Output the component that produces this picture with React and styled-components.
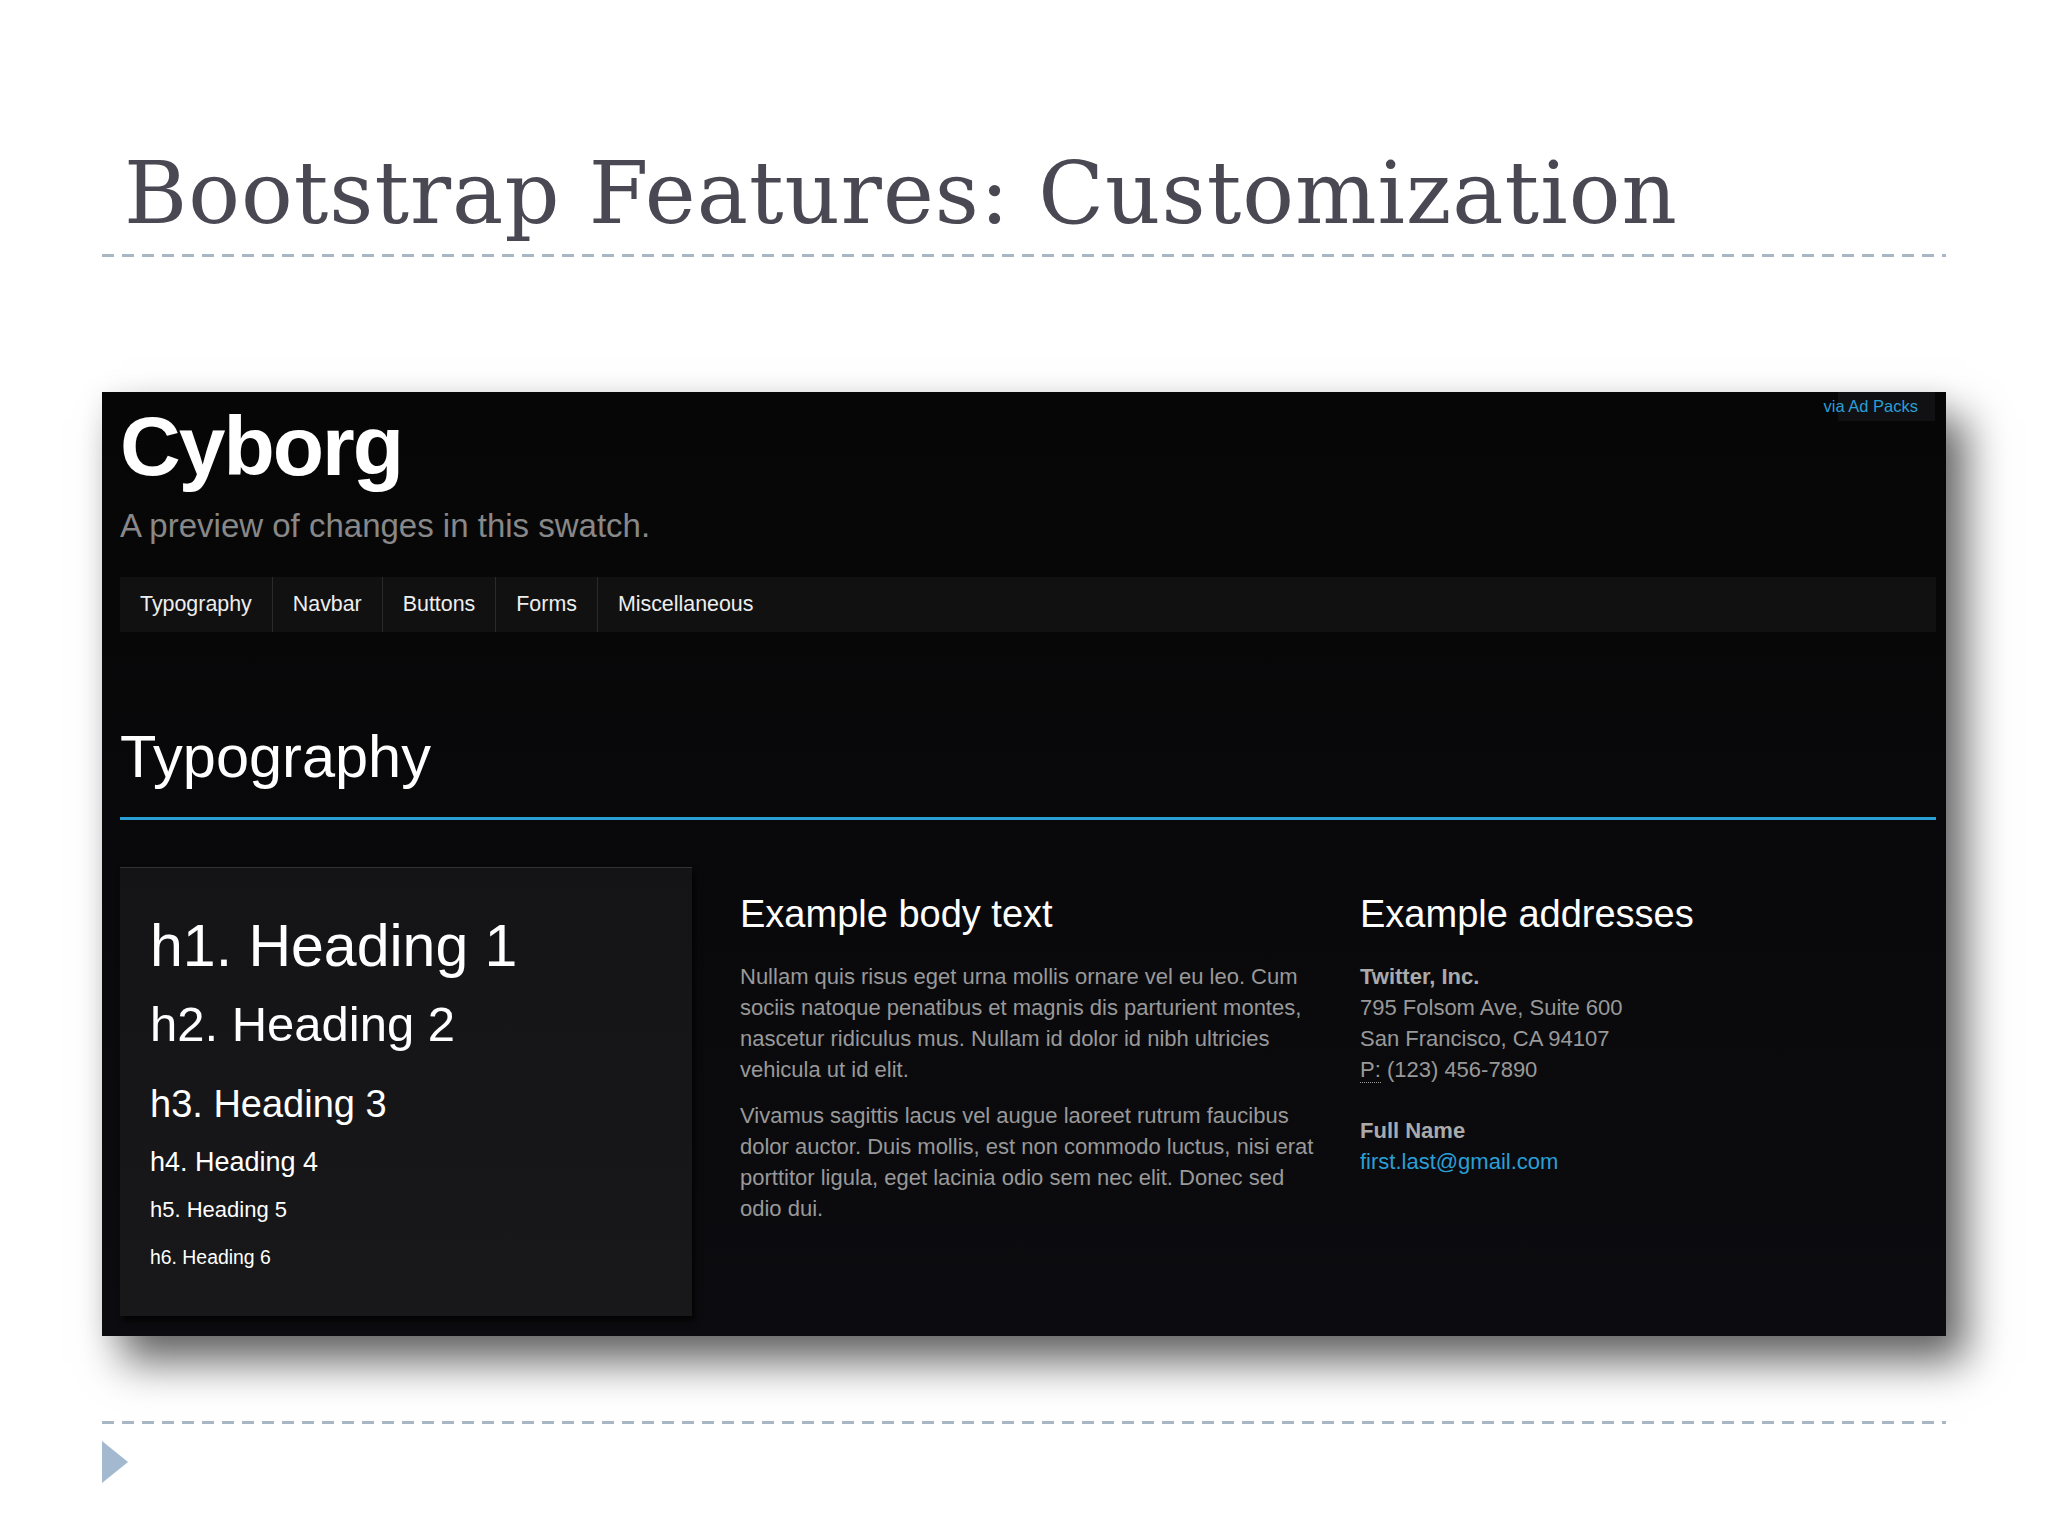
import styled, { createGlobalStyle } from 'styled-components';

const GlobalStyle = createGlobalStyle`
  html, body {
    margin: 0;
    padding: 0;
    background: #ffffff;
  }
  body {
    width: 2048px;
    height: 1536px;
    overflow: hidden;
    font-family: "Liberation Sans", Arial, sans-serif;
  }
`;

const Slide = styled.div`
  width: 2048px;
  height: 1536px;
  box-sizing: border-box;
  padding: 143px 102px 0;
  display: flex;
  flex-direction: column;
  background: #ffffff;
`;

const Title = styled.h1`
  margin: 0 0 0 22px;
  font-family: "DejaVu Serif", "Liberation Serif", serif;
  font-weight: normal;
  font-size: 86px;
  line-height: 100px;
  letter-spacing: 1px;
  color: #4a4953;
  white-space: nowrap;
`;

const DashRule = styled.div`
  height: 3px;
  margin-top: ${({ $top }) => $top}px;
  background: repeating-linear-gradient(
    90deg,
    #a9b6c4 0 12px,
    transparent 12px 20px
  );
`;

const Bullet = styled.div`
  width: 0;
  height: 0;
  margin-top: 17px;
  border-left: 26px solid #a3b9cf;
  border-top: 21px solid transparent;
  border-bottom: 21px solid transparent;
`;

/* the embedded screenshot of the Cyborg swatch */
const Screen = styled.div`
  position: relative;
  margin-top: 135px;
  height: 944px;
  box-sizing: border-box;
  padding: 12px 10px 0 18px;
  background: linear-gradient(#060606, #0c0c10);
  box-shadow: 0 0 24px rgba(0, 0, 0, 0.06), 20px 26px 40px rgba(0, 0, 0, 0.6);
  font-family: "Liberation Sans", Arial, sans-serif;
  overflow: hidden;
`;

const AdBadge = styled.div`
  position: absolute;
  top: 0;
  right: 11px;
  width: 97px;
  height: 29px;
  box-sizing: border-box;
  padding-right: 17px;
  display: flex;
  align-items: center;
  justify-content: flex-end;
  background: #111114;
  color: #2a9fd6;
  font-size: 16.5px;
  white-space: nowrap;
`;

const Brand = styled.h1`
  margin: 0;
  font-size: 84px;
  line-height: 84px;
  font-weight: bold;
  letter-spacing: -2px;
  color: #ffffff;
`;

const Lead = styled.p`
  margin: 20px 0 0;
  font-size: 33px;
  line-height: 36px;
  color: #888888;
`;

const Nav = styled.nav`
  margin-top: 33px;
  height: 55px;
  display: flex;
  background: #111111;
`;

const NavItem = styled.a`
  display: flex;
  align-items: center;
  padding: 0 20px;
  border-right: 1px solid #2a2a2a;
  font-size: 21.4px;
  color: #eeeeee;
  text-decoration: none;

  &:last-child {
    border-right: none;
  }
`;

const PageHeader = styled.div`
  margin-top: 93px;
  padding-bottom: 28px;
  border-bottom: 3px solid #2a9fd6;
`;

const SectionTitle = styled.h1`
  margin: 0;
  font-size: 59.5px;
  line-height: 64px;
  font-weight: normal;
  color: #ffffff;
`;

const Row = styled.div`
  margin-top: 47px;
  display: grid;
  grid-template-columns: repeat(3, 572px);
  column-gap: 48px;
  align-items: start;
`;

const Well = styled.div`
  height: 449px;
  box-sizing: border-box;
  padding: 0 30px;
  background: linear-gradient(#141416, #18181b);
  border-top: 1px solid #333335;
  box-shadow: 3px 5px 6px rgba(0, 0, 0, 0.75);
`;

const Heading = styled.div`
  margin-top: ${({ $mt }) => $mt}px;
  font-size: ${({ $size }) => $size}px;
  line-height: ${({ $lh }) => $lh}px;
  color: #ffffff;
  white-space: nowrap;
`;

const ColTitle = styled.h2`
  margin: 25px 0 0;
  font-size: 38px;
  line-height: 44px;
  font-weight: normal;
  color: #ffffff;
`;

const Para = styled.p`
  margin: ${({ $first }) => ($first ? 25 : 15)}px 0 0;
  font-size: 22px;
  line-height: 31px;
  color: #999999;
`;

const Line = styled.span`
  display: block;
  white-space: nowrap;
`;

const Address = styled.address`
  margin: ${({ $first }) => ($first ? 25 : 30)}px 0 0;
  font-style: normal;
  font-size: 22px;
  line-height: 31px;
  color: #999999;
`;

const Strong = styled.strong`
  display: block;
  color: #aaaaaa;
`;

const Abbr = styled.abbr`
  text-decoration: none;
  border-bottom: 1px dotted #999999;
`;

const Mail = styled.a`
  display: block;
  color: #2a9fd6;
  text-decoration: none;
`;

const headings = [
  { text: 'h1. Heading 1', size: 59, lh: 64, mt: 46 },
  { text: 'h2. Heading 2', size: 49, lh: 56, mt: 18 },
  { text: 'h3. Heading 3', size: 38, lh: 44, mt: 30 },
  { text: 'h4. Heading 4', size: 27, lh: 32, mt: 20 },
  { text: 'h5. Heading 5', size: 22, lh: 26, mt: 19 },
  { text: 'h6. Heading 6', size: 19.4, lh: 24, mt: 22 },
];

const paragraphs = [
  [
    'Nullam quis risus eget urna mollis ornare vel eu leo. Cum',
    'sociis natoque penatibus et magnis dis parturient montes,',
    'nascetur ridiculus mus. Nullam id dolor id nibh ultricies',
    'vehicula ut id elit.',
  ],
  [
    'Vivamus sagittis lacus vel augue laoreet rutrum faucibus',
    'dolor auctor. Duis mollis, est non commodo luctus, nisi erat',
    'porttitor ligula, eget lacinia odio sem nec elit. Donec sed',
    'odio dui.',
  ],
];

const navLinks = ['Typography', 'Navbar', 'Buttons', 'Forms', 'Miscellaneous'];

const App = () => (
  <>
    <GlobalStyle />
    <Slide>
      <Title>Bootstrap Features: Customization</Title>
      <DashRule $top={11} />

      <Screen>
        <AdBadge>via Ad Packs</AdBadge>
        <Brand>Cyborg</Brand>
        <Lead>A preview of changes in this swatch.</Lead>
        <Nav>
          {navLinks.map((link) => (
            <NavItem key={link}>{link}</NavItem>
          ))}
        </Nav>

        <PageHeader>
          <SectionTitle>Typography</SectionTitle>
        </PageHeader>

        <Row>
          <Well>
            {headings.map((h) => (
              <Heading key={h.text} $size={h.size} $lh={h.lh} $mt={h.mt}>
                {h.text}
              </Heading>
            ))}
          </Well>

          <div>
            <ColTitle>Example body text</ColTitle>
            {paragraphs.map((lines, i) => (
              <Para key={i} $first={i === 0}>
                {lines.map((l) => (
                  <Line key={l}>{l}</Line>
                ))}
              </Para>
            ))}
          </div>

          <div>
            <ColTitle>Example addresses</ColTitle>
            <Address $first>
              <Strong>Twitter, Inc.</Strong>
              <Line>795 Folsom Ave, Suite 600</Line>
              <Line>San Francisco, CA 94107</Line>
              <Line>
                <Abbr title="Phone">P:</Abbr> (123) 456-7890
              </Line>
            </Address>
            <Address>
              <Strong>Full Name</Strong>
              <Mail href="#">first.last@gmail.com</Mail>
            </Address>
          </div>
        </Row>
      </Screen>

      <DashRule $top={85} />
      <Bullet />
    </Slide>
  </>
);

export default App;
